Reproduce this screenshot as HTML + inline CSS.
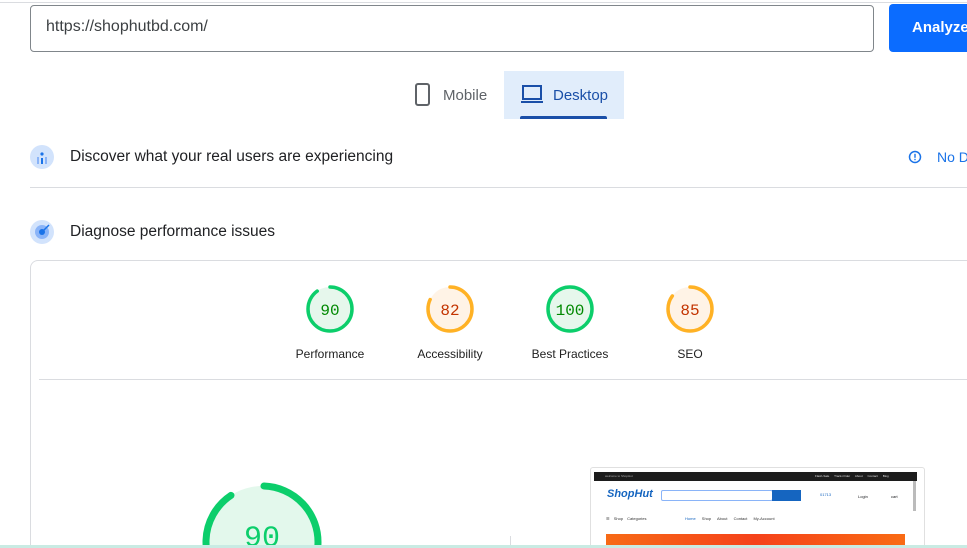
<!DOCTYPE html>
<html style="width:967px;height:548px;overflow:hidden"><head><meta charset="utf-8">
<style>
*{box-sizing:border-box;margin:0;padding:0}
body{width:967px;height:548px;overflow:hidden;background:#fff;font-family:"Liberation Sans",sans-serif;position:relative;color:#202124}
.abs{position:absolute;white-space:nowrap}
.lbl{position:absolute;font-size:12px;color:#212121;text-align:center;width:120px;top:347px}
</style></head><body>
<div class="abs" style="left:0;top:2px;width:967px;height:1px;background:#dadce0"></div>
<div class="abs" style="left:30px;top:5px;width:844px;height:47px;border:1px solid #80868b;border-radius:4px"></div>
<div class="abs" style="left:46px;top:18px;font-size:16px;color:#3c4043">https://shophutbd.com/</div>
<div class="abs" style="left:889px;top:4px;width:90px;height:48px;background:#0b6cff;border-radius:4px"></div>
<div class="abs" style="left:912px;top:19px;font-size:15px;color:#fff;font-weight:bold">Analyze</div>

<svg class="abs" style="left:413px;top:83px" width="20" height="24" viewBox="0 0 20 24"><rect x="3" y="1" width="13" height="21" rx="2" fill="none" stroke="#5f6368" stroke-width="2"/></svg>
<div class="abs" style="left:443px;top:87px;font-size:15px;color:#5f6368">Mobile</div>
<div class="abs" style="left:504px;top:71px;width:120px;height:48px;background:#e1edfb"></div>
<svg class="abs" style="left:520px;top:84px" width="26" height="22" viewBox="0 0 26 22"><rect x="3" y="2" width="18" height="13" fill="none" stroke="#1a4fa8" stroke-width="2"/><rect x="1" y="17" width="22" height="2" fill="#1a4fa8"/></svg>
<div class="abs" style="left:553px;top:87px;font-size:15px;color:#1a4fa8">Desktop</div>
<div class="abs" style="left:520px;top:116px;width:87px;height:3px;background:#1a4fa8;border-radius:2px 2px 0 0"></div>

<svg class="abs" style="left:30px;top:145px" width="24" height="24" viewBox="0 0 24 24"><circle cx="12" cy="12" r="12" fill="#d2e3fc"/><rect x="7" y="12" width="2" height="7" fill="#8ab4f8"/><rect x="11" y="13" width="2" height="6" fill="#1a73e8"/><rect x="15" y="12" width="2" height="7" fill="#8ab4f8"/><circle cx="12" cy="9" r="1.6" fill="#1a73e8"/></svg>
<div class="abs" style="left:70px;top:148px;font-size:15.5px">Discover what your real users are experiencing</div>
<svg class="abs" style="left:908px;top:150px" width="14" height="14" viewBox="0 0 14 14"><circle cx="7" cy="7" r="5.5" fill="none" stroke="#1a73e8" stroke-width="1.5"/><rect x="6.3" y="3.8" width="1.4" height="4" fill="#1a73e8"/><rect x="6.3" y="8.8" width="1.4" height="1.4" fill="#1a73e8"/></svg>
<div class="abs" style="left:937px;top:149px;font-size:14px;color:#1a73e8">No Data</div>
<div class="abs" style="left:30px;top:187px;width:937px;height:1px;background:#dadce0"></div>

<svg class="abs" style="left:30px;top:220px" width="24" height="24" viewBox="0 0 24 24"><circle cx="12" cy="12" r="12" fill="#d2e3fc"/><circle cx="12" cy="12" r="7" fill="#8ab4f8"/><circle cx="12" cy="12" r="3" fill="#1a73e8"/><path d="M12 12 L19 5" stroke="#1a73e8" stroke-width="1.5"/></svg>
<div class="abs" style="left:70px;top:223px;font-size:15.5px">Diagnose performance issues</div>

<div class="abs" style="left:30px;top:260px;width:950px;height:288px;border:1px solid #dadce0;border-bottom:none;border-radius:8px 8px 0 0"></div>
<div class="abs" style="left:39px;top:379px;width:928px;height:1px;background:#dadce0"></div>

<svg class="abs" style="left:300px;top:280px" width="420" height="60" viewBox="0 0 420 60">
<g transform="translate(30,29)"><circle r="22" fill="#e6f7ec"/><circle r="22" fill="none" stroke="#0cce6b" stroke-width="3.5" stroke-dasharray="124.4 200" transform="rotate(-90)" stroke-linecap="round"/><text y="6" text-anchor="middle" fill="#008800" font-family="Liberation Mono" font-size="16">90</text></g>
<g transform="translate(150,29)"><circle r="22" fill="#fff3e6"/><circle r="22" fill="none" stroke="#ffa400" stroke-opacity=".85" stroke-width="3.5" stroke-dasharray="113.3 200" transform="rotate(-90)" stroke-linecap="round"/><text y="6" text-anchor="middle" fill="#c33300" font-family="Liberation Mono" font-size="16">82</text></g>
<g transform="translate(270,29)"><circle r="22" fill="#e6f7ec"/><circle r="22" fill="none" stroke="#0cce6b" stroke-width="3.5"/><text y="6" text-anchor="middle" fill="#008800" font-family="Liberation Mono" font-size="16">100</text></g>
<g transform="translate(390,29)"><circle r="22" fill="#fff3e6"/><circle r="22" fill="none" stroke="#ffa400" stroke-opacity=".85" stroke-width="3.5" stroke-dasharray="117.5 200" transform="rotate(-90)" stroke-linecap="round"/><text y="6" text-anchor="middle" fill="#c33300" font-family="Liberation Mono" font-size="16">85</text></g>
</svg>
<div class="lbl" style="left:270px">Performance</div>
<div class="lbl" style="left:390px">Accessibility</div>
<div class="lbl" style="left:510px">Best Practices</div>
<div class="lbl" style="left:630px">SEO</div>

<svg class="abs" style="left:200px;top:480px" width="124" height="68" viewBox="0 0 124 68">
<g transform="translate(62,62)"><circle r="56" fill="#e3f8ec"/><circle r="56" fill="none" stroke="#0cce6b" stroke-width="7" stroke-dasharray="316.7 400" transform="rotate(-88)" stroke-linecap="round"/><text y="4" text-anchor="middle" fill="#0cce6b" font-family="Liberation Mono" font-size="30">90</text></g>
</svg>
<div class="abs" style="left:510px;top:536px;width:1px;height:12px;background:#dadce0"></div>

<div class="abs" style="left:590px;top:467px;width:335px;height:81px;border:1px solid #e0e0e0;border-bottom:none;border-radius:3px 3px 0 0;background:#fff;overflow:hidden"></div>
<div class="abs" style="left:594px;top:472px;width:323px;height:9px;background:#1c1c1c"></div>
<div class="abs" style="left:605px;top:474px;font-size:3px;color:#aaa">welcome to ShopHut</div>
<div class="abs" style="left:815px;top:474px;font-size:3px;color:#ddd;word-spacing:4px">Flash-Sale Track-Order About Contact Blog</div>
<div class="abs" style="left:913px;top:481px;width:3px;height:30px;background:#bbb"></div>
<div class="abs" style="left:607px;top:488px;font-size:11px;font-weight:bold;font-style:italic;color:#1565c0">ShopHut</div>
<div class="abs" style="left:661px;top:490px;width:112px;height:11px;border:1px solid #8ab4f8;border-radius:2px"></div>
<div class="abs" style="left:772px;top:490px;width:29px;height:11px;background:#1565c0"></div>
<div class="abs" style="left:820px;top:492px;font-size:4px;color:#1565c0">01713</div>
<div class="abs" style="left:858px;top:494px;font-size:4px">Login</div>
<div class="abs" style="left:891px;top:494px;font-size:4px">cart</div>
<div class="abs" style="left:606px;top:516px;font-size:4px;color:#333;word-spacing:3px">☰ Shop Categories</div>
<div class="abs" style="left:685px;top:516px;font-size:4px;color:#333;word-spacing:5px"><span style="color:#1565c0">Home</span> Shop About Contact My-Account</div>
<div class="abs" style="left:606px;top:534px;width:299px;height:14px;background:linear-gradient(90deg,#f76a16,#f5421a,#f96b14)"></div>

<div class="abs" style="left:0;top:545px;width:967px;height:3px;background:#c9ebe3"></div>
</body></html>
